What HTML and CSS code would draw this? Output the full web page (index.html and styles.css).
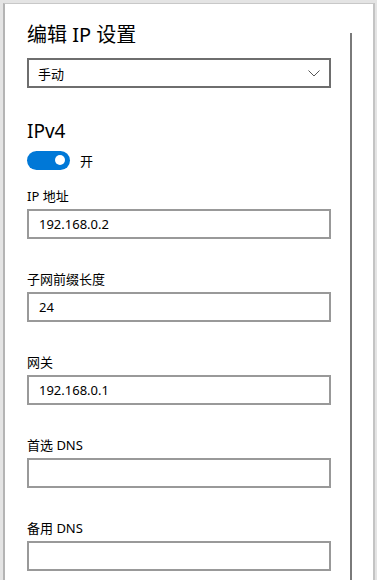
FILE: index.html
```html
<!DOCTYPE html>
<html lang="zh-CN">
<head>
    <meta charset="UTF-8">
    <meta name="viewport" content="width=device-width, initial-scale=1.0">
    <title>编辑 IP 设置</title>
    <link rel="stylesheet" href="styles.css">
</head>
<body>
    <!-- Dialog window -->
    <div class="window">
        <div class="content">
            <h1 class="title">编辑 IP 设置</h1>

            <div class="select">
                <span>手动</span>
                <svg class="chevron" width="12" height="7" viewBox="0 0 12 7">
                    <polyline points="0.5,0.5 6,6 11.5,0.5" fill="none" stroke="#555" stroke-width="1"/>
                </svg>
            </div>

            <h2 class="section">IPv4</h2>
            <div class="toggle-row">
                <div class="toggle"><span class="knob"></span></div>
                <span class="toggle-label">开</span>
            </div>

            <div class="field first">
                <label>IP 地址</label>
                <div class="input">192.168.0.2</div>
            </div>
            <div class="field">
                <label>子网前缀长度</label>
                <div class="input">24</div>
            </div>
            <div class="field">
                <label>网关</label>
                <div class="input">192.168.0.1</div>
            </div>
            <div class="field">
                <label>首选 DNS</label>
                <div class="input"></div>
            </div>
            <div class="field">
                <label>备用 DNS</label>
                <div class="input"></div>
            </div>
        </div>

        <!-- Scrollbar track -->
        <div class="scrollbar"><div class="scroll-line"></div></div>
    </div>
</body>
</html>
```

FILE: styles.css
```css
body {
    margin: 0;
    padding: 0;
    background-color: #e4e4e4;
    font-family: "Noto Sans", "Noto Sans CJK SC", sans-serif;
    color: #000;
    height: 580px;
    overflow: hidden;
}

/* Window */
.window {
    display: flex;
    margin: 3px 0 0 3px;
    width: 368px;
    height: 576px;
    overflow: hidden;
    background-color: #fff;
    border-left: 2px solid #b4b4b4;
    border-top: 1px solid #c8c8c8;
    border-right: 2px solid #c4c4c4;
}

.content {
    width: 304px;
    padding: 17px 0 0 22px;
}

.title {
    margin: 0;
    font-size: 20px;
    font-weight: normal;
    line-height: 28px;
}

/* Dropdown */
.select {
    margin-top: 9px;
    height: 30px;
    box-sizing: border-box;
    border: 2px solid #6e6e6e;
    display: flex;
    align-items: center;
    justify-content: space-between;
    padding: 0 9px 0 9px;
    font-size: 13px;
}

.chevron {
    display: block;
}

.section {
    margin: 30px 0 0 0;
    font-size: 19px;
    font-weight: normal;
    line-height: 26px;
}

/* Toggle switch */
.toggle-row {
    display: flex;
    align-items: center;
    margin-top: 6px;
    height: 20px;
}

.toggle {
    position: relative;
    width: 43px;
    height: 19px;
    border-radius: 10px;
    background-color: #0078d7;
}

.knob {
    position: absolute;
    top: 4.5px;
    right: 5px;
    width: 10px;
    height: 10px;
    border-radius: 50%;
    background-color: #fff;
}

.toggle-label {
    margin-left: 10px;
    font-size: 13px;
}

/* Text fields */
.field {
    margin-top: 31px;
}

.field.first {
    margin-top: 17px;
}

.field label {
    display: block;
    font-size: 13px;
    line-height: 18px;
}

.input {
    margin-top: 4px;
    height: 30px;
    box-sizing: border-box;
    border: 2px solid #999;
    padding: 0 10px;
    font-size: 13px;
    line-height: 26px;
}

/* Scrollbar */
.scrollbar {
    width: 42px;
    display: flex;
    flex-direction: column;
}

.scroll-line {
    flex: 1;
    margin: 29px 0 0 19px;
    width: 2px;
    background-color: #7a7a7a;
}
```
